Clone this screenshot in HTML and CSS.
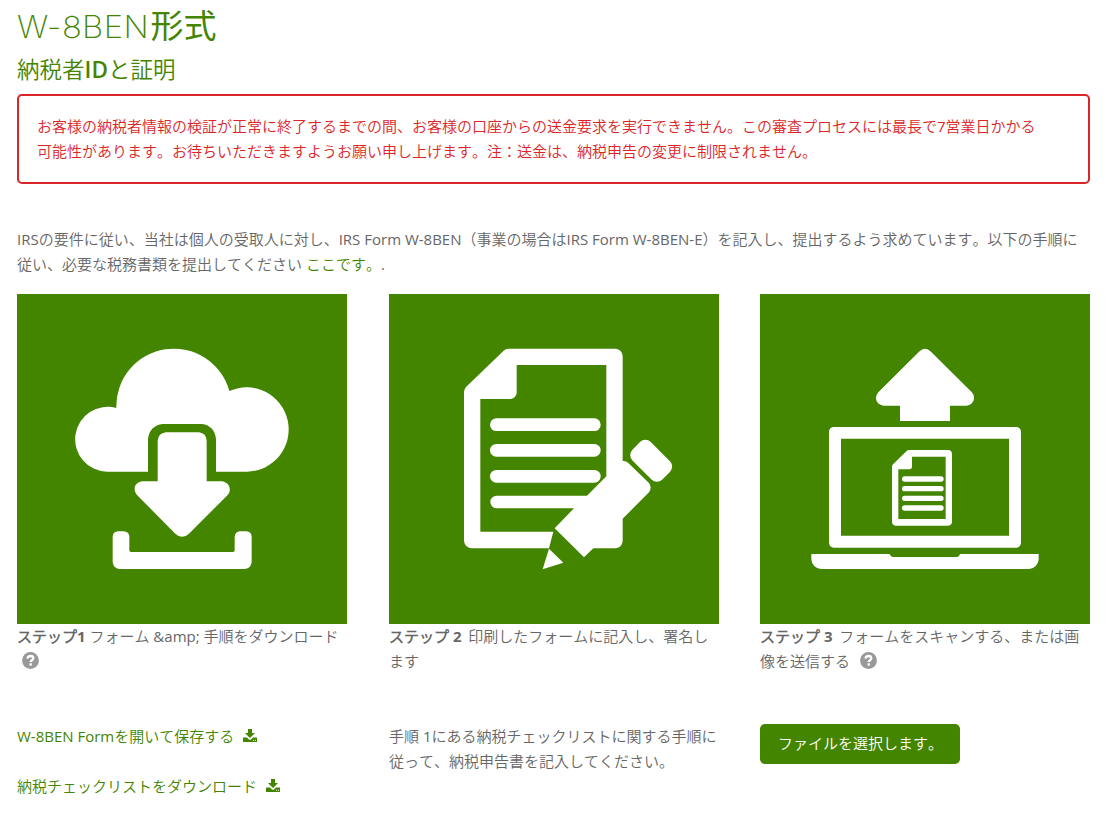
FILE: index.html
```html
<!DOCTYPE html>
<html lang="ja">
<head>
<meta charset="utf-8">
<title>W-8BEN形式</title>
<link rel="stylesheet" href="styles.css">
</head>
<body>
<svg class="defs" width="0" height="0" aria-hidden="true">
  <symbol id="help" viewBox="0 0 17 17">
    <circle cx="8.5" cy="8.5" r="8.4" fill="#999"/>
    <path d="M5.5 6.6C5.7 4.9 6.900 4 8.500 4c1.700 0 2.800.9 2.800 2.300 0 2-2.600 1.900-2.600 3.800" fill="none" stroke="#fff" stroke-width="2.300"/>
    <rect x="7.500" y="11.300" width="2.400" height="2.300" fill="#fff"/>
  </symbol>
  <symbol id="download" viewBox="0 0 14 13">
    <path d="M5 0h4v4h3L7 9 2 4h3zM0 8.6h4L6 10.4q1 .8 2 0l2-1.8h4V13H0z" fill="#448500"/>
    <path d="M10 11.3h1M12 11.3h1" stroke="#fff" stroke-width="1"/>
  </symbol>
</svg>
<main class="page">
  <h1 class="title"><span class="title-code">W-8BEN</span>形式</h1>
  <h2 class="subtitle">納税者<span class="subtitle-id">ID</span>と証明</h2>
  <div class="alert">お客様の納税者情報の検証が正常に終了するまでの間、お客様の口座からの送金要求を実行できません。この審査プロセスには最長で7営業日かかる<br>可能性があります。お待ちいただきますようお願い申し上げます。注：送金は、納税申告の変更に制限されません。</div>
  <p class="intro">IRSの要件に従い、当社は個人の受取人に対し、IRS Form W-8BEN（事業の場合はIRS Form W-8BEN-E）を記入し、提出するよう求めています。以下の手順に<br>従い、必要な税務書類を提出してください <a class="link">ここです。</a>.</p>
  <div class="steps">
    <section class="step">
      <svg class="picture" viewBox="0 0 990 990">
        <path fill="#fff" d="M393 533H270A97.300 97.300 0 1 1 298 342A172.600 172.600 0 0 1 637 291A126.500 126.500 0 1 1 690 533H597V435Q592 395 555 390H437Q398 395 393 435Z"/>
        <path fill="#fff" d="M422 562V440Q424 418 446 415H546Q568 418 569 440V562H613C638 564 645 588 632 603L516 719Q495 738 475 719L360 603C345 585 355 563 378 562Z"/>
        <path fill="#fff" d="M287 728Q288 713 303 712H320Q336 713 337 728V769Q337 774 342 774H648Q653 774 653 769V728Q655 713 669 712H688Q703 713 704 728V804Q702 823 684 825H307Q289 823 287 804Z"/>
      </svg>
      <p class="caption"><b>ステップ1</b> フォーム &amp;amp; 手順をダウンロード<br><svg class="help help-start"><use href="#help"/></svg></p>
      <div class="action">
        <a class="link">W-8BEN Formを開いて保存する<svg class="download"><use href="#download"/></svg></a>
        <a class="link">納税チェックリストをダウンロード<svg class="download"><use href="#download"/></svg></a>
      </div>
    </section>
    <section class="step">
      <svg class="picture" viewBox="0 0 990 990">
        <path fill="#fff" fill-rule="evenodd" d="M358 164H680Q699 166 701 186V501Q711 500 718 507L780 567Q790 580 780 595L701 674V741Q699 761 680 763H613L585 790L497 703L555 643H323A18.500 18.500 0 0 1 323 605H594L652 547V213H383V297Q381 312 365 315H274V713H493L480 763H247Q228 761 225 741V294Q225 286 231 279L344 170Q350 164 358 164Z"/>
        <path fill="#fff" d="M480 764L523 806L461 826Z"/>
        <rect x="303" y="373" width="332" height="38" rx="19" fill="#fff"/>
        <rect x="303" y="450" width="332" height="38" rx="19" fill="#fff"/>
        <rect x="303" y="528" width="332" height="38" rx="19" fill="#fff"/>
        <rect x="723" y="461.500" width="127" height="78" rx="23" transform="rotate(45 786.500 500.500)" fill="#fff"/>
      </svg>
      <p class="caption"><b class="numbered">ステップ 2</b>&nbsp; 印刷したフォームに記入し、署名し<br>ます</p>
      <p class="action">手順 1にある納税チェックリストに関する手順に<br>従って、納税申告書を記入してください。</p>
    </section>
    <section class="step">
      <svg class="picture" viewBox="0 0 990 990">
        <path fill="#fff" d="M420 335H370C347 331 342 310 355 295L477 173Q495 156 513 173L634 293C650 309 641 332 620 335H570V381H420Z"/>
        <path fill="#fff" fill-rule="evenodd" d="M220 399H770Q782 401 783 413V747Q781 760 770 761H220Q208 759 207 747V413Q208 400 220 399ZM243 434V725H747V434Z"/>
        <path fill="#fff" fill-rule="evenodd" d="M447 468H565Q575 469 576 479V685Q575 694 565 695H406Q397 694 396 685V517Q397 513 400 510L439 472Q443 468 447 468ZM456 488V520Q455 525 450 526H415V675H557V488Z"/>
        <path d="M434 555H543M434 584H543M434 613H543M434 642H543" stroke="#fff" stroke-width="16" stroke-linecap="round"/>
        <path fill="#fff" d="M154 780H389Q391 788 398 789H592Q598 788 600 780H836V797Q832 821 808 825H183Q157 821 154 797Z"/>
      </svg>
      <p class="caption"><b class="numbered">ステップ 3</b>&nbsp; フォームをスキャンする、または画<br>像を送信する<svg class="help help-after"><use href="#help"/></svg></p>
      <div class="action"><button class="button" type="button">ファイルを選択します。</button></div>
    </section>
  </div>
</main>
</body>
</html>
```
FILE: styles.css
```css
* { box-sizing: border-box; }
body {
  margin: 0;
  background: #fff;
  color: #666;
  font: 400 15px/25px "Open Sans", "Noto Sans CJK JP DemiLight", "Noto Sans CJK JP", sans-serif;
  font-kerning: none;
}
h1, h2, p { margin: 0; }
.defs { display: block; }
.page { width: 1073px; margin-left: 17px; white-space: nowrap; }
.title {
  height: 51px;
  color: #448500;
  font: 400 33px/48px "Noto Sans CJK JP", sans-serif;
}
.title-code {
  display: inline-block;
  width: 133.500px;
  font-family: "Inter", sans-serif;
  font-size: 30.500px;
  font-weight: 200;
  letter-spacing: .3px;
  transform: scaleX(1.08);
  transform-origin: left;
}
.subtitle {
  height: 43px;
  color: #448500;
  font: 400 22.500px/34px "Noto Sans CJK JP DemiLight", "Noto Sans CJK JP", sans-serif;
}
.subtitle-id { font-family: "Open Sans", sans-serif; font-weight: 600; }
.alert {
  height: 90px;
  padding: 18px;
  border: 2px solid #dc2528;
  border-radius: 5px;
  color: #dc2528;
}
.intro { margin-top: 43px; height: 67px; }
.link { color: #448500; }
.steps { display: grid; grid-template-columns: 372px 371px 330px; }
.picture { display: block; width: 330px; height: 330px; background: #448500; }
.caption { height: 100px; }
.caption b { font-weight: 700; }
.numbered { margin-right: -1px; }
.help { width: 17px; height: 17px; vertical-align: -2px; }
.help-start { margin-left: 5px; }
.help-after { margin-left: 10px; }
.download { width: 14px; height: 13px; margin-left: 9px; vertical-align: 0; }
.action { display: flex; flex-direction: column; align-items: flex-start; gap: 25px; }
p.action { display: block; }
.button {
  width: 200px;
  height: 40px;
  padding: 0 18px 2px;
  border: 0;
  border-radius: 5px;
  background: #448500;
  color: #fff;
  font: inherit;
  text-align: left;
}
```
